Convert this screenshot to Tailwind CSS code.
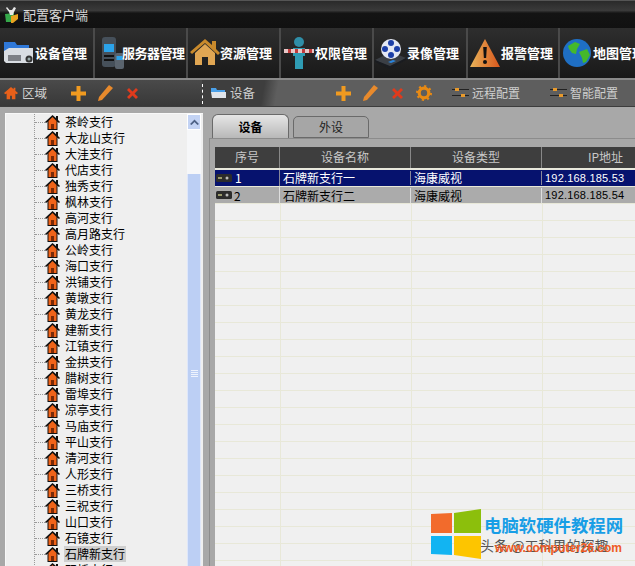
<!DOCTYPE html>
<html lang="zh-CN">
  <head>
    <meta charset="UTF-8" />
    <script src="https://cdn.jsdelivr.net/npm/@tailwindcss/browser@4"></script>
    <title>配置客户端</title>
  </head>
  <body class="m-0 bg-[#a8a8a8]">
    <div class="relative w-[635px] h-[566px] overflow-hidden bg-[#a8a8a8] font-['Noto_Sans_CJK_SC','Liberation_Sans',sans-serif] text-[12px]">
      <!-- title bar -->
      <div class="h-[28px] bg-[linear-gradient(#2a2a2a_0,#3a3a3a_35%,#141414_45%,#111_100%)] border-t border-[#555] flex items-center pl-[5px] gap-[5px] text-[#d8d8d8] text-[13px]">
        <svg width="13" height="17" viewBox="0 0 13 17"><path d="M0 8l9-1v9H1z" fill="#35a84a"/><path d="M6 10l7-2v5l-5 4H6z" fill="#e8a420"/><path d="M2 1l2.500 3L7 4l2-3 2 1-2 4-1 3-3 0-1-3-3-4z" fill="#e8e8e8"/></svg>
        <span>配置客户端</span>
      </div>

      <!-- main toolbar -->
      <div class="h-[52px] flex bg-[linear-gradient(#2e2e2e,#191919)] border-b-2 border-[#8a8a8a] text-white font-bold text-[13px]">
        <div class="w-[95px] shrink-0 border-r-2 border-[#4a4a4a] flex items-center pl-[3px]">
          <svg width="32" height="32" viewBox="0 0 32 32" class="shrink-0"><path d="M1 5h11l2 3h12v8H1z" fill="#2f78d8"/><path d="M1 14l5-3h24v15H3l-2-2z" fill="#d9dde2"/><rect x="5" y="18" width="13" height="6" fill="#7d8086"/><circle cx="26" cy="22" r="3.500" fill="#333"/><circle cx="26" cy="22" r="1.500" fill="#9aa"/></svg>
          <span>设备管理</span>
        </div>
        <div class="w-[93px] shrink-0 border-r-2 border-[#4a4a4a] flex items-center pl-[6px]">
          <svg width="24" height="34" viewBox="0 0 24 34" class="shrink-0 -mr-[3px]"><rect x="1" y="1" width="14" height="30" rx="3" fill="#46505a"/><rect x="3" y="8" width="10" height="8" fill="#2ba3ea"/><rect x="3" y="19" width="10" height="2" fill="#111"/><rect x="3" y="23" width="10" height="2" fill="#111"/><rect x="14" y="17" width="9" height="16" rx="2" fill="#5a646e"/><rect x="15.500" y="20" width="6" height="4" fill="#2ba3ea"/></svg>
          <span class="whitespace-nowrap tracking-[-0.5px]">服务器管理</span>
        </div>
        <div class="w-[93px] shrink-0 border-r-2 border-[#4a4a4a] flex items-center pl-[2px]">
          <svg width="30" height="30" viewBox="0 0 30 30" class="shrink-0"><path d="M0 14L15 1l7 6V3h4v8l4 4-2 2L15 5 2 16z" fill="#c98a2c"/><path d="M5 15L15 6l10 9v12h-7v-8h-6v8H5z" fill="#e0a653"/></svg>
          <span>资源管理</span>
        </div>
        <div class="w-[93px] shrink-0 border-r-2 border-[#4a4a4a] flex items-center pl-[2px]">
          <svg width="32" height="34" viewBox="0 0 32 34" class="shrink-0"><circle cx="16" cy="6" r="5" fill="#2f8ea8"/><path d="M10 12h12v8h-2v13h-8V20h-2z" fill="#2f9cb4"/><rect x="1" y="13" width="30" height="4" fill="#e8c8c8"/><path d="M5 13h3v4H5zm7 0h3v4h-3zm7 0h3v4h-3zm7 0h3v4h-3z" fill="#c03a3a"/></svg>
          <span>权限管理</span>
        </div>
        <div class="w-[94px] shrink-0 border-r-2 border-[#4a4a4a] flex items-center">
          <svg width="33" height="34" viewBox="0 0 33 34" class="shrink-0"><path d="M1 24l16-8 15 6-16 10z" fill="#3b3f45"/><path d="M1 24l15 6 16-8v2L16 33 1 26z" fill="#1a1c20"/><circle cx="17" cy="13" r="10" fill="#e4e8f4"/><circle cx="17" cy="7" r="3" fill="#1c3fa8"/><circle cx="17" cy="19" r="3" fill="#1c3fa8"/><circle cx="11" cy="13" r="3" fill="#1c3fa8"/><circle cx="23" cy="13" r="3" fill="#1c3fa8"/><path d="M14 26l5-2 3 1-5 2z" fill="#2a86e0"/></svg>
          <span>录像管理</span>
        </div>
        <div class="w-[92px] shrink-0 border-r-2 border-[#4a4a4a] flex items-center pl-[1px]">
          <svg width="32" height="30" viewBox="0 0 32 30" class="shrink-0"><defs><linearGradient id="warn" x1="0" x2="1" y1="0" y2="0"><stop offset="0" stop-color="#e8b45a"/><stop offset="1" stop-color="#d8561c"/></linearGradient></defs><path d="M16 1l15 28H1z" fill="url(#warn)"/><path d="M14.200 9h3.600l-.7 11h-2.200z" fill="#111"/><circle cx="16" cy="24" r="2" fill="#111"/></svg>
          <span>报警管理</span>
        </div>
        <div class="flex-1 flex items-center pl-[3px] whitespace-nowrap overflow-hidden">
          <svg width="28" height="28" viewBox="0 0 28 28" class="shrink-0 mr-[2px]"><circle cx="14" cy="14" r="14" fill="#1f6fc4"/><path d="M5 7l7-4 5 2-3 5-1 5-4-1-3-4zM16 13l8-3 3 6-4 7-3 1-1-5z" fill="#45b82c"/></svg>
          <span>地图管理</span>
        </div>
      </div>

      <!-- sub toolbar -->
      <div class="h-[27px] flex border-b border-[#3c3c3c] text-[#cfcfcf] text-[12.5px]">
        <div class="w-[202px] shrink-0 bg-[linear-gradient(#4a4a4a,#383838)] flex items-center pl-[4px] relative">
          <svg width="14" height="14" viewBox="0 0 16 16"><path d="M8 1L0 8l1.500 1.500L3 8.500V15h4v-4h2v4h4V8.500l1.500 1L16 8l-3-2.600V2h-2v1.600z" fill="#e8601a"/></svg>
          <span class="ml-[4px]">区域</span>
          <svg width="15" height="15" viewBox="0 0 15 15" class="ml-[24px]"><path d="M5.500 0h4v5.500H15v4H9.500V15h-4V9.500H0v-4h5.500z" fill="#f09a20"/></svg>
          <svg width="15" height="16" viewBox="0 0 15 16" class="ml-[12px]"><path d="M11 0l4 3L4 15l-4 1 1-4z" fill="#e88a2c"/></svg>
          <svg width="11" height="11" viewBox="0 0 11 11" class="ml-[14px]"><path d="M0 2l2-2 3.500 3.500L9 0l2 2-3.500 3.500L11 9l-2 2-3.500-3.500L2 11 0 9l3.500-3.500z" fill="#e03a1c"/></svg>
          <span class="absolute left-[202px] top-[4px] h-[20px] border-l border-dashed border-white"></span>
        </div>
        <div class="flex-1 bg-[linear-gradient(100deg,#3e3e3e_62px,#5e5e5e_76px)] flex items-center pl-[9px]">
          <svg width="15" height="12" viewBox="0 0 15 12"><path d="M0 1h5l1 2h8v3H0z" fill="#4aa0e8"/><path d="M0 5h15v6H1z" fill="#dfe4ea"/></svg>
          <span class="ml-[4px]">设备</span>
          <svg width="15" height="15" viewBox="0 0 15 15" class="ml-[81px]"><path d="M5.500 0h4v5.500H15v4H9.500V15h-4V9.500H0v-4h5.500z" fill="#f09a20"/></svg>
          <svg width="15" height="16" viewBox="0 0 15 16" class="ml-[12px]"><path d="M11 0l4 3L4 15l-4 1 1-4z" fill="#e88a2c"/></svg>
          <svg width="11" height="11" viewBox="0 0 11 11" class="ml-[14px]"><path d="M0 2l2-2 3.500 3.500L9 0l2 2-3.500 3.500L11 9l-2 2-3.500-3.500L2 11 0 9l3.500-3.500z" fill="#e03a1c"/></svg>
          <svg width="16" height="16" viewBox="0 0 15 15" class="ml-[13px]"><circle cx="7.500" cy="7.500" r="4.500" fill="none" stroke="#e88a14" stroke-width="3"/><circle cx="7.500" cy="7.500" r="6.500" fill="none" stroke="#e88a14" stroke-width="2" stroke-dasharray="2 3.100"/></svg>
          <svg width="17" height="10" viewBox="0 0 17 10" class="ml-[20px]"><path d="M0 1h17v1H0zM0 7h17v1H0z" fill="#222"/><rect x="3" y="0" width="4" height="3" fill="#e89a2c"/><rect x="9" y="6" width="4" height="3" fill="#e89a2c"/></svg>
          <span class="ml-[3px] text-[12px]">远程配置</span>
          <svg width="17" height="10" viewBox="0 0 17 10" class="ml-[30px]"><path d="M0 1h17v1H0zM0 7h17v1H0z" fill="#222"/><rect x="3" y="0" width="4" height="3" fill="#e89a2c"/><rect x="9" y="6" width="4" height="3" fill="#e89a2c"/></svg>
          <span class="ml-[3px] text-[12px]">智能配置</span>
        </div>
      </div>

      <!-- body -->
      <div class="flex h-[459px] pt-[6px]">
        <!-- tree -->
        <div class="ml-[5px] w-[198px] shrink-0 bg-[#efefef] border-t border-l border-[#f8f8f8] flex h-[460px] overflow-hidden">
          <ul id="tree" class="flex-1 ml-[28px] pt-[0px] border-l border-dotted border-[#9a9a9a] text-[12px] text-black"></ul>
          <div class="w-[14px] mr-[2px] flex flex-col bg-[#f6f7f9]">
            <div class="h-[16px] bg-[#c3d3f4] border border-white flex items-center justify-center">
              <svg width="9" height="6" viewBox="0 0 9 6"><path d="M0 5l4.500-4.500L9 5 7.500 6 4.500 3 1.500 6z" fill="#4d6185"/></svg>
            </div>
            <div class="h-[44px]"></div>
            <div class="flex-1 bg-[#bccff4] border-x border-[#dfe7fa] flex flex-col items-center justify-center gap-[1px]">
              <span class="w-[7px] h-[1px] bg-[#eef3fd]"></span><span class="w-[7px] h-[1px] bg-[#eef3fd]"></span><span class="w-[7px] h-[1px] bg-[#eef3fd]"></span><span class="w-[7px] h-[1px] bg-[#eef3fd]"></span>
            </div>
          </div>
        </div>

        <!-- right panel -->
        <div class="flex-1 min-w-0 pl-[6px] pt-[1px]">
          <div class="flex items-end h-[24px] pl-[3px] gap-[4px] text-[12px]">
            <div class="w-[77px] h-[24px] bg-[linear-gradient(#e6e6e6,#b8b8b8)] border border-[#6a6a6a] border-b-0 rounded-t-[6px] flex items-center justify-center font-bold text-black">设备</div>
            <div class="w-[76px] h-[22px] bg-[#a6a6a6] border border-[#6a6a6a] rounded-t-[5px] flex items-center justify-center text-[#222]">外设</div>
          </div>
          <div class="border-t border-l border-[#8c8c8c] pl-[5px] pt-[8px] h-[430px]">
            <div class="flex h-[21px] bg-[#3e3e3e] text-[#c8c8c8] text-center leading-[20px]">
              <div class="w-[65px] shrink-0 border-r border-[#888]">序号</div>
              <div class="w-[131px] shrink-0 border-r border-[#888]">设备名称</div>
              <div class="w-[131px] shrink-0 border-r border-[#888]">设备类型</div>
              <div class="w-[127px] shrink-0">IP地址</div>
            </div>
            <div class="h-[2px] bg-[#e8e8dc]"></div>
            <div class="h-[396px] bg-[#f0f0f0] [background-image:linear-gradient(#e8e8d8_1px,transparent_1px),linear-gradient(90deg,transparent_65px,#e8e8d8_65px,#e8e8d8_66px,transparent_66px,transparent_196px,#e8e8d8_196px,#e8e8d8_197px,transparent_197px,transparent_327px,#e8e8d8_327px,#e8e8d8_328px,transparent_328px)] [background-size:100%_17px,100%_100%] [background-position:0_16px,0_0]">
              <div class="flex h-[16px] bg-[#06126e] text-white leading-[14px] items-center">
                <div class="w-[65px] shrink-0 border-r border-[#889] pl-[1px] flex items-center h-full">
                  <svg width="16" height="8" viewBox="0 0 16 8" class="mr-[3px]"><rect width="16" height="8" rx="1.500" fill="#2c2c2c"/><rect x="2" y="3" width="4" height="2" fill="#9a9a6a"/><circle cx="11" cy="4" r="1.500" fill="#bbb"/></svg>1
                </div>
                <div class="w-[131px] shrink-0 border-r border-[#889] pl-[3px]">石牌新支行一</div>
                <div class="w-[131px] shrink-0 border-r border-[#889] pl-[3px]">海康威视</div>
                <div class="flex-1 pl-[3px] font-['Liberation_Sans'] text-[11px] tracking-[0.2px]">192.168.185.53</div>
              </div>
              <div class="flex h-[16px] mt-[1px] bg-[#ababab] text-black leading-[15px] items-center">
                <div class="w-[65px] shrink-0 border-r border-[#ddd] pl-[1px] flex items-center h-full">
                  <svg width="16" height="8" viewBox="0 0 16 8" class="mr-[2px]"><rect width="16" height="8" rx="1.500" fill="#2c2c2c"/><rect x="2" y="3" width="4" height="2" fill="#9a9a6a"/><circle cx="11" cy="4" r="1.500" fill="#bbb"/></svg>2
                </div>
                <div class="w-[131px] shrink-0 border-r border-[#ddd] pl-[3px]">石牌新支行二</div>
                <div class="w-[131px] shrink-0 border-r border-[#ddd] pl-[3px]">海康威视</div>
                <div class="flex-1 pl-[3px] font-['Liberation_Sans'] text-[11px] tracking-[0.2px]">192.168.185.54</div>
              </div>
            </div>
          </div>
        </div>
      </div>

      <!-- watermark -->
      <div class="absolute left-[431px] top-[509px] w-[204px] h-[57px]">
        <svg width="50" height="50" viewBox="0 0 50 50" class="absolute left-0 top-0">
          <path d="M0 5l21-1v20H0z" fill="#f26b2c"/>
          <path d="M23 4l27-4v24H23z" fill="#8cbf0c"/>
          <path d="M0 27h21v19l-21-1z" fill="#12b4f2"/>
          <path d="M23 27h27v23l-27-4z" fill="#fdc500"/>
        </svg>
        <span class="absolute left-[53px] top-[6px] text-[17.4px] leading-[20px] font-bold text-[#189ee6] whitespace-nowrap">电脑软硬件教程网</span>
        <span class="absolute left-[49px] top-[27px] text-[14px] leading-[18px] text-[#555] whitespace-nowrap">头条 @工科男的探趣</span>
        <span class="absolute left-[64px] top-[32px] text-[12px] leading-[14px] font-bold text-[#ee5a24] whitespace-nowrap font-['Liberation_Sans']">www.computer26.com</span>
      </div>
    </div>

    <script>
      // 支行列表
      const branches = ["茶岭支行","大龙山支行","大洼支行","代店支行","独秀支行","枫林支行","高河支行","高月路支行","公岭支行","海口支行","洪铺支行","黄墩支行","黄龙支行","建新支行","江镇支行","金拱支行","腊树支行","雷埠支行","凉亭支行","马庙支行","平山支行","清河支行","人形支行","三桥支行","三祝支行","山口支行","石镜支行","石牌新支行","双桥支行"];
      const tree = document.getElementById("tree");
      branches.forEach((name) => {
        const li = document.createElement("li");
        li.className = "flex items-center h-[16px] whitespace-nowrap";
        const selected = name === "石牌新支行";
        li.innerHTML = `
          <span class="w-[10px] border-t border-dotted border-[#9a9a9a]"></span>
          <svg width="15" height="15" viewBox="0 0 15 15" class="shrink-0"><path d="M7.500 0L0 7l1 1 1.500-1.200V15h10V6.800L14 8l1-1-2-2V1h-2v2z" fill="#111"/><path d="M7.500 2L3.500 6v8h8V6z" fill="#f0641a"/><rect x="6" y="9" width="3" height="5" fill="#7a2a08"/></svg>
          <span class="ml-[4px] px-[1px] leading-[16px] ${selected ? "bg-[#cfcfcf]" : ""}">${name}</span>`;
        tree.appendChild(li);
      });
    </script>
  </body>
</html>
